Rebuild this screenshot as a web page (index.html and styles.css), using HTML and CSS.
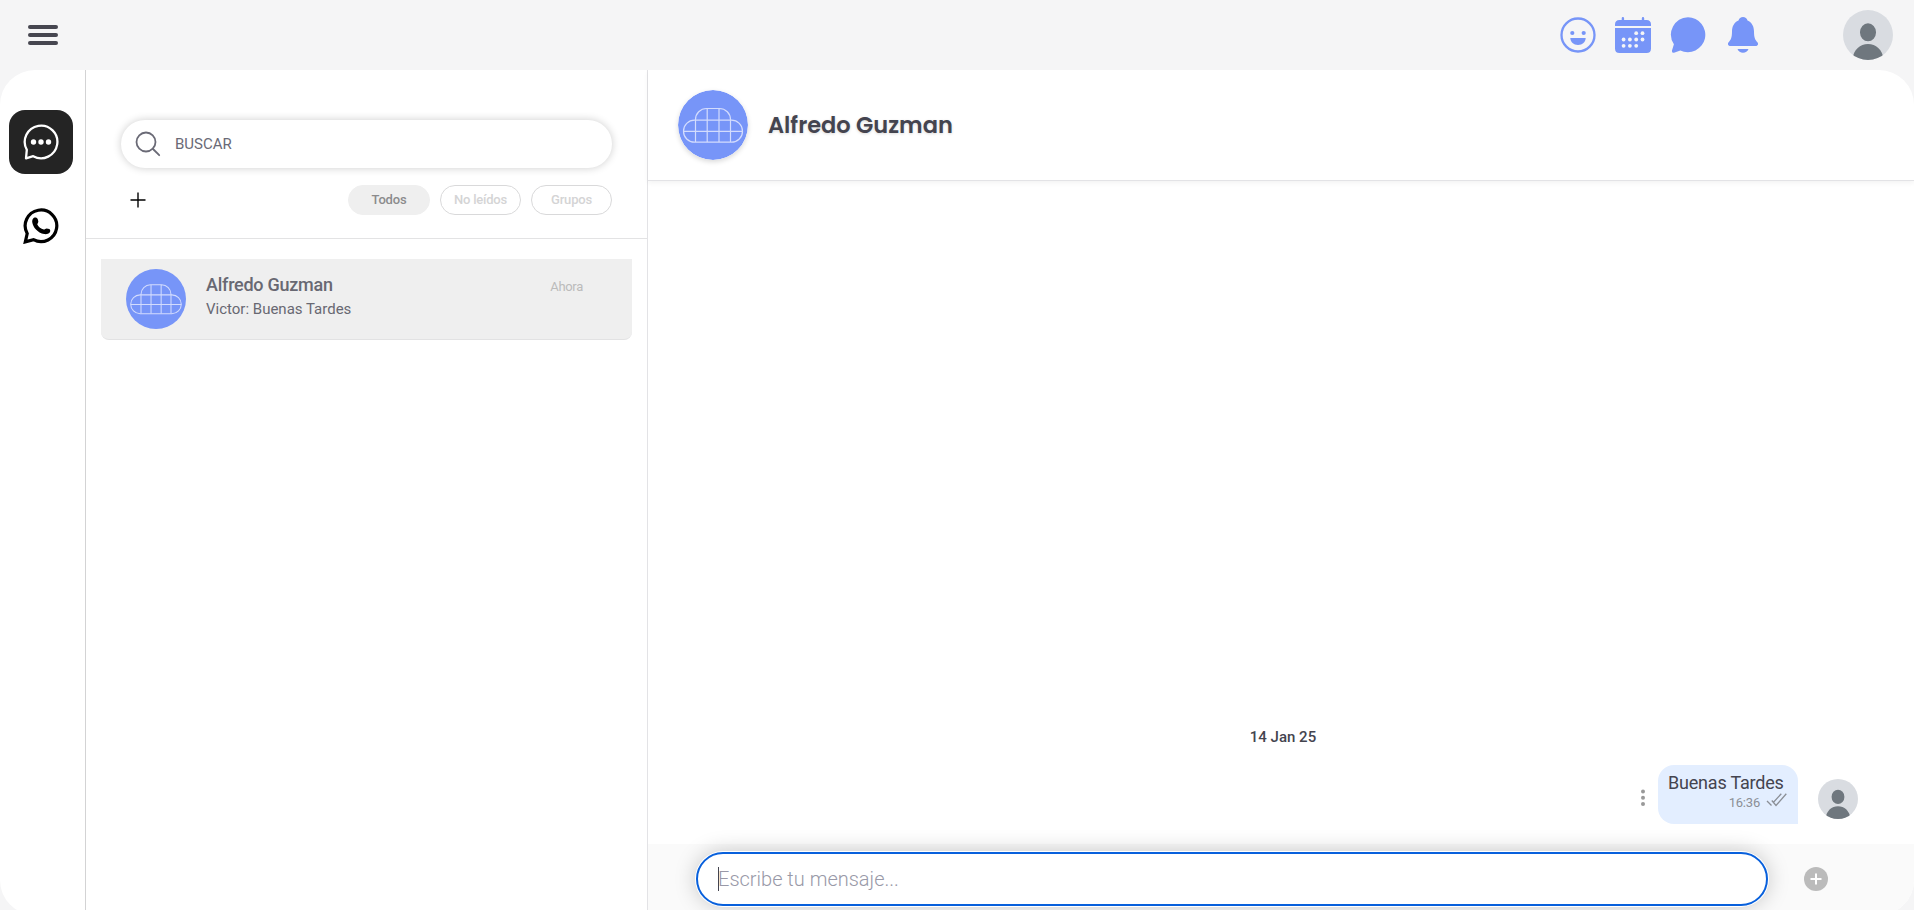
FILE: index.html
```html
<!DOCTYPE html>
<html lang="es">
<head>
<meta charset="utf-8">
<title>Chat</title>
<link rel="stylesheet" href="styles.css">
</head>
<body>
<svg class="defs" width="0" height="0" aria-hidden="true">
  <symbol id="person" viewBox="0 0 50 50">
    <clipPath id="round"><circle cx="25" cy="25" r="25"/></clipPath>
    <g clip-path="url(#round)">
      <rect width="50" height="50" fill="#d9dce1"/>
      <rect x="17" y="13.3" width="16" height="18" rx="8" ry="8.8" fill="#6f777e"/>
      <path d="M9 50C11 39 17 34 25 34s14 5 16 16z" fill="#6f777e"/>
    </g>
  </symbol>
  <symbol id="cloud" viewBox="0 0 70 70">
    <circle cx="35" cy="35" r="35" fill="#7795f8"/>
    <g fill="none" stroke="#d3dcfd" stroke-width="1.2">
      <path d="M16.500 30.200H53.500a11 11 0 0 1 0 22H16.500a11 11 0 0 1 0-22z"/>
      <path d="M17.500 52V29.500a11 11 0 0 1 11-11H41.500a11 11 0 0 1 11 11V52M29.200 18.500V52M41 18.500V52M5.500 41.400H64.500"/>
    </g>
  </symbol>
</svg>
<header class="topbar">
  <button class="menu" aria-label="Menú"><span></span><span></span><span></span></button>
  <nav class="actions">
    <svg width="36" height="36" viewBox="0 0 36 36"><circle cx="18" cy="18" r="16.500" fill="none" stroke="#7795f8" stroke-width="2.300"/><circle cx="12.300" cy="16" r="2.100"/><circle cx="23.700" cy="16" r="2.100"/><path d="M10.300 21H25.700C25.500 25 22.500 28 18 28s-7.500-3-7.700-7z"/></svg>
    <svg width="36" height="36" viewBox="0 0 36 36"><path d="M0 9V7.500Q0 3 4.500 3H6.700V1.300a1.200 1.200 0 0 1 2.400 0V3H26.800V1.300a1.200 1.200 0 0 1 2.400 0V3H31.500Q36 3 36 7.500V9zM0 11H36V31.500Q36 36 31.500 36H4.500Q0 36 0 31.500z"/><g fill="#f5f5f6"><circle cx="21.200" cy="16.200" r="1.900"/><circle cx="27.500" cy="16.200" r="1.900"/><circle cx="8.600" cy="22.500" r="1.900"/><circle cx="14.900" cy="22.500" r="1.900"/><circle cx="21.200" cy="22.500" r="1.900"/><circle cx="27.500" cy="22.500" r="1.900"/><circle cx="8.600" cy="28.800" r="1.900"/><circle cx="14.900" cy="28.800" r="1.900"/><circle cx="21.200" cy="28.800" r="1.900"/></g></svg>
    <svg width="36" height="36" viewBox="0 0 36 36"><path d="M18 .2A17.500 17.500 0 1 1 10.300 33.500L4 35.700Q1.600 36 2 33.500L3.900 27.300A17.500 17.500 0 0 1 18 .2z"/></svg>
    <svg width="36" height="36" viewBox="0 0 36 36"><path d="M18 0c2.200 0 4 1.500 4.500 3.500 4.500 2 6.500 6 6.500 11 0 6 1.200 8.500 3.200 10.500C34 27 32.700 29 30.500 29H5.500C3.300 29 2 27 3.800 25 5.800 23 7 20.500 7 14.500c0-5 2-9 6.500-11C14 1.500 15.800 0 18 0zM12.500 32H23.500C22.500 34.500 20.500 35.700 18 35.700s-4.500-1.200-5.500-3.700z"/></svg>
  </nav>
  <svg class="me" width="50" height="50"><use href="#person"/></svg>
</header>
<main class="app">
  <aside class="rail">
    <div class="channel active">
      <svg width="36" height="36" viewBox="0 0 36 36"><path d="M3.800 25.800A16.300 16.300 0 1 1 10.200 32.200L3 34.300z" fill="none" stroke="#fff" stroke-width="2.300" stroke-linejoin="round"/><g fill="#fff"><circle cx="10.500" cy="18" r="2.700"/><circle cx="18" cy="18" r="2.700"/><circle cx="25.500" cy="18" r="2.700"/></g></svg>
    </div>
    <div class="channel">
      <svg width="36" height="36" viewBox="0 0 36 36"><path d="M4.200 25.500A15.800 15.800 0 1 1 10.500 31.700L2.300 33.900z" fill="none" stroke="#000" stroke-width="3.200"/><path d="M11 9.700C12.300 9 14.200 9.500 14.700 11l.6 2.200c.3 1.200-1 2.200-1 3.200 1.300 2.500 3.500 4.300 6.500 5.200 1-.1 1.900-1.300 3-1.200l2.400.6c1.200.4 1.400 2.400.5 3.500-1.300 1.500-3.300 2-5.500 1.600C14.500 24.700 10 19.500 9.200 14c-.1-1.700.5-3.500 1.800-4.300z"/></svg>
    </div>
  </aside>
  <section class="inbox">
    <div class="filters">
      <label class="search">
        <svg width="26" height="26" viewBox="0 0 26 26" fill="none" stroke="#6a6a76" stroke-width="1.800" stroke-linecap="round"><circle cx="11" cy="11" r="9.500"/><path d="M18 18l6.200 6.200"/></svg>
        <span>BUSCAR</span>
      </label>
      <div class="tabs">
        <svg width="16" height="16" viewBox="0 0 16 16"><path d="M8 .5v15M.5 8h15" stroke="#000" stroke-width="1.400"/></svg>
        <span class="tab selected">Todos</span><span class="tab">No leídos</span><span class="tab">Grupos</span>
      </div>
    </div>
    <article class="conversation">
      <svg width="60" height="60"><use href="#cloud"/></svg>
      <div class="summary"><div class="name">Alfredo Guzman</div><div class="preview">Victor: Buenas Tardes</div></div>
      <time>Ahora</time>
    </article>
  </section>
  <section class="chat">
    <div class="chat-head">
      <svg class="contact" width="70" height="70"><use href="#cloud"/></svg>
      <h1>Alfredo Guzman</h1>
    </div>
    <div class="messages">
      <div class="date">14 Jan 25</div>
      <div class="message">
        <svg class="more" width="4" height="18" viewBox="0 0 4 18"><circle cx="2" cy="2.500" r="2"/><circle cx="2" cy="8.800" r="2"/><circle cx="2" cy="15" r="2"/></svg>
        <div class="bubble">
          <div class="text">Buenas Tardes</div>
          <div class="meta">16:36<svg width="21" height="14" viewBox="0 0 21 14" fill="none" stroke="#8b8f96" stroke-width="1.300"><path d="M1 8l4.500 4.500M5.800 7.500l4.200 5L20.300.7M7.300 9.500L15.300.7"/></svg></div>
        </div>
        <svg width="40" height="40"><use href="#person"/></svg>
      </div>
    </div>
    <div class="composer">
      <div class="input"><i class="caret"></i>Escribe tu mensaje...</div>
      <svg width="24" height="24" viewBox="0 0 24 24"><circle cx="12" cy="12" r="12" fill="#bbb"/><path d="M12 6.500v11M6.500 12h11" stroke="#fff" stroke-width="2"/></svg>
    </div>
  </section>
</main>
</body>
</html>
```
FILE: styles.css
```css
* { box-sizing: border-box; }
html { overflow: hidden; }
body { margin: 0; height: 910px; overflow: hidden; background: #f5f5f6; font-family: Roboto, sans-serif; color: #44444f; }
svg { display: block; flex: none; }
.defs { position: absolute; }
.topbar { height: 70px; display: flex; align-items: center; padding: 0 21px 0 28px; }
.menu { display: flex; flex-direction: column; gap: 4px; width: 30px; padding: 0; border: 0; background: none; }
.menu span { height: 4px; border-radius: 2px; background: #464650; }
.actions { display: flex; gap: 19px; margin-left: auto; margin-right: 82px; fill: #7795f8; }
.app { height: 845px; display: flex; background: #fff; border-radius: 35px; overflow: hidden; }
.rail { width: 86px; flex: none; border-right: 1px solid #d3d3d4; padding: 40px 0 0 9px; display: flex; flex-direction: column; gap: 20px; }
.channel { width: 64px; height: 64px; border-radius: 16px; display: flex; align-items: center; justify-content: center; }
.channel.active { background: #242424; }
.inbox { width: 562px; flex: none; border-right: 1px solid #e3e3e6; }
.filters { height: 169px; padding: 50px 35px 0; border-bottom: 1px solid #e3e3e4; }
.search { height: 48px; border-radius: 24px; display: flex; align-items: center; gap: 14px; padding-left: 14px; box-shadow: 0 0 8px rgba(0,0,0,.2); font-size: 15px; color: #6a6a76; }
.tabs { display: flex; align-items: center; gap: 10px; margin-top: 17px; padding-left: 9px; }
.tabs svg { margin-right: auto; }
.tab { width: 81px; height: 30px; border: 1px solid #d9d9da; border-radius: 15px; font-size: 13px; font-weight: 500; letter-spacing: -.2px; line-height: 28px; text-align: center; color: #d4d4d5; }
.tab.selected { width: 82px; background: #efefef; border-color: #efefef; color: #8b8b8c; }
.conversation { display: flex; height: 81px; margin: 20px 15px 0; padding: 10px 49px 0 25px; background: #efefef; border-bottom: 1px solid #e2e2e3; border-radius: 0 0 8px 8px; }
.summary { margin-left: 20px; padding-top: 4px; flex: 1; color: #686872; }
.name { font-size: 18px; font-weight: 500; letter-spacing: -.25px; line-height: 24px; }
.preview { font-size: 15px; line-height: 24px; }
.conversation time { padding-top: 10px; font-size: 13px; letter-spacing: -.3px; line-height: 15px; color: #bbb; }
.chat { flex: 1; display: flex; flex-direction: column; }
.chat-head { height: 111px; display: flex; align-items: center; gap: 20px; padding-left: 30px; border-bottom: 1px solid #e3e3e6; box-shadow: 0 2px 5px rgba(0,0,0,.05); }
.contact { border-radius: 50%; box-shadow: 0 2px 5px rgba(0,0,0,.15); }
h1 { margin: 0; font: 600 22.5px Poppins, Inter, sans-serif; text-shadow: 0 1px 3px rgba(0,0,0,.15); }
.messages { flex: 1; display: flex; flex-direction: column; justify-content: flex-end; padding: 0 56px 20px 30px; }
.date { font-size: 15px; font-weight: 500; line-height: 20px; margin: 0 -30px 18px 0; text-align: center; }
.message { display: flex; align-items: flex-end; justify-content: flex-end; }
.more { margin: 0 13px 17px 0; fill: #999; }
.bubble { width: 140px; height: 59px; margin-right: 20px; padding: 7px 11px 0 10px; background: #e3eeff; border-radius: 16px 16px 0 16px; font-size: 18px; line-height: 21px; }
.text { white-space: nowrap; letter-spacing: -.2px; }
.message > svg:last-child { margin-bottom: 5px; }
.meta { display: flex; justify-content: flex-end; gap: 6px; font-size: 13px; letter-spacing: -.2px; line-height: 19px; color: #8b8f96; }
.composer { height: 71px; padding: 8px 86px 0 48px; display: flex; justify-content: space-between; background: #fafafa; }
.composer > svg { margin-top: 15px; }
.input { width: 1072px; height: 54px; display: flex; align-items: center; padding-left: 20px; border: 2px solid #0860dc; border-radius: 27px; background: #fff; box-shadow: 0 0 0 1px #fff, 0 0 22px rgba(0,0,0,.22); font-size: 20px; font-weight: 300; color: #9999a8; }
.caret { width: 1px; height: 24px; margin-right: -1px; background: #44444f; }
```
